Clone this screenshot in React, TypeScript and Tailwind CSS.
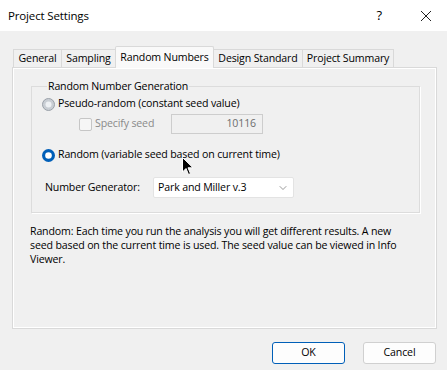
import { ChevronDown } from "lucide-react"

const font = { fontFamily: '"Open Sans", "Noto Sans", sans-serif' }

function Tab({ label, width, active }: { label: string; width: string; active?: boolean }) {
  if (active) {
    return (
      <div className={`relative z-10 -mb-px h-[22px] ${width} border border-b-0 border-[#d9d9d9] bg-[#f9f9f9] rounded-t-[2px] flex items-center justify-center whitespace-nowrap -mr-px`}>
        {label}
      </div>
    )
  }
  return (
    <div className={`mt-[3px] h-[18px] ${width} border border-b-0 border-[#d9d9d9] bg-[#f0f0f0] flex items-center justify-center whitespace-nowrap -mr-px`}>
      {label}
    </div>
  )
}

function RadioDisabled() {
  return (
    <svg width="13" height="13" viewBox="0 0 13 13">
      <circle cx="6.5" cy="6.5" r="6" fill="#c9ced4" stroke="#9aa1a9" strokeWidth="1" />
      <circle cx="6.5" cy="6.5" r="3" fill="#eef1f4" />
    </svg>
  )
}

function RadioOn() {
  return (
    <svg width="13" height="13" viewBox="0 0 13 13">
      <circle cx="6.5" cy="6.5" r="6.5" fill="#005fb8" />
      <circle cx="6.5" cy="6.5" r="3.3" fill="#ffffff" />
    </svg>
  )
}

export default function App() {
  return (
    <div className="w-[447px] h-[370px] flex flex-col bg-[#f0f0f0] text-[10.6px] tracking-[-0.15px] text-black overflow-hidden relative" style={font}>
      <div className="h-[31px] bg-white flex items-center pl-[8px] shrink-0">
        <span className="text-[11.5px]">Project Settings</span>
        <span className="ml-auto mr-[38px] text-[13px]">?</span>
        <svg width="12" height="12" viewBox="0 0 12 12" className="mr-[15px]">
          <path d="M1 1 L11 11 M11 1 L1 11" stroke="#222" strokeWidth="1" />
        </svg>
      </div>

      <div className="flex-1 flex flex-col pt-[15px] pl-[12px] pr-[10px]">
        <div className="flex items-start h-[21px] pl-[1px]">
          <Tab label="General" width="w-[49px]" />
          <Tab label="Sampling" width="w-[55px]" />
          <Tab label="Random Numbers" width="w-[99px]" active />
          <Tab label="Design Standard" width="w-[90px]" />
          <Tab label="Project Summary" width="w-[92px]" />
        </div>

        <div className="h-[262px] border border-[#d9d9d9] shadow-[inset_1px_1px_0_#ffffff,inset_-1px_-1px_0_#ffffff] bg-[#f0f0f0] pt-[11px] pl-[18px] pr-[16px]">
          <fieldset className="border border-[#dcdcdc] shadow-[1px_1px_0_#ffffff] h-[134px] pl-[10px] pr-[10px]">
            <legend className="px-[1px] ml-[5px] leading-[14px]">Random Number Generation</legend>
            <div className="flex items-center gap-[2px] mt-[4px] h-[14px]">
              <RadioDisabled />
              <span className="ml-[1px]">Pseudo-random (constant seed value)</span>
            </div>
            <div className="flex items-center mt-[3px] ml-[37px] h-[20px]">
              <div className="w-[13px] h-[13px] border border-[#c6c6c6] bg-[#f6f6f6] rounded-[2px]" />
              <span className="ml-[3px] text-[#8a8a8a]">Specify seed</span>
              <div className="ml-auto mr-[146px] w-[92px] h-[20px] border border-[#cdcdcd] bg-[#f0f0f0] text-[#6d6d6d] flex items-center justify-end pr-[6px]">
                10116
              </div>
            </div>
            <div className="flex items-center gap-[2px] mt-[14px] h-[14px]">
              <RadioOn />
              <span className="ml-[1px]">Random (variable seed based on current time)</span>
            </div>
            <div className="flex items-center mt-[15px] h-[21px] pl-[3px]">
              <span className="w-[108px]">Number Generator:</span>
              <div className="w-[141px] h-[21px] bg-white border border-[#e3e3e3] rounded-[2px] flex items-center pl-[4px] pr-[4px]">
                <span>Park and Miller v.3</span>
                <ChevronDown className="ml-auto text-[#555]" size={12} strokeWidth={1.2} />
              </div>
            </div>
          </fieldset>

          <p className="mt-[11px] -ml-[1px] leading-[14px] w-[374px]">
            Random: Each time you run the analysis you will get different results. A new seed based on the current time is used. The seed value can be viewed in Info Viewer.
          </p>
        </div>

        <div className="flex justify-end gap-[18px] mt-[13px] pr-[1px]">
          <button className="w-[73px] h-[22px] bg-[#fdfdfd] border border-[#005fb8] rounded-[3px] flex items-center justify-center">
            OK
          </button>
          <button className="w-[73px] h-[22px] bg-[#fdfdfd] border border-[#d0d0d0] rounded-[3px] flex items-center justify-center">
            Cancel
          </button>
        </div>
      </div>

      <svg width="12" height="19" viewBox="0 0 12 19" className="absolute left-[182px] top-[157px]">
        <path d="M0.5 0.5 L0.5 15 L4 11.5 L6.5 17.5 L8.5 16.6 L6 10.8 L11 10.8 Z" fill="#000" stroke="#fff" strokeWidth="1" />
      </svg>
    </div>
  )
}
